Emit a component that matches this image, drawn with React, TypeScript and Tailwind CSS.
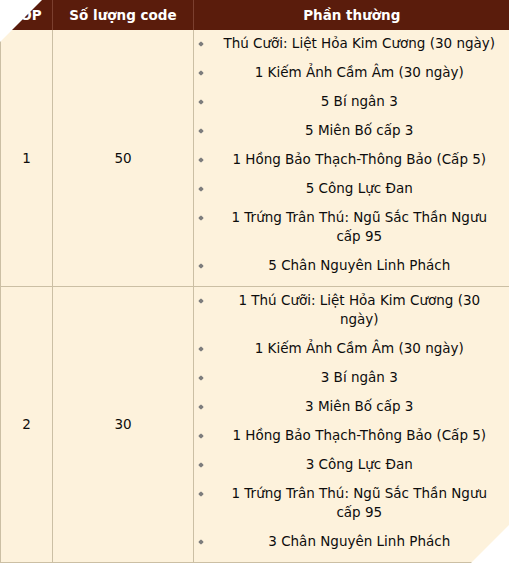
type Reward = { top: string; count: string; items: string[] };

const rewards: Reward[] = [
  {
    top: "1",
    count: "50",
    items: [
      "Thú Cưỡi: Liệt Hỏa Kim Cương (30 ngày)",
      "1 Kiếm Ảnh Cầm Âm (30 ngày)",
      "5 Bí ngân 3",
      "5 Miên Bố cấp 3",
      "1 Hồng Bảo Thạch-Thông Bảo (Cấp 5)",
      "5 Công Lực Đan",
      "1 Trứng Trân Thú: Ngũ Sắc Thần Ngưu cấp 95",
      "5 Chân Nguyên Linh Phách",
    ],
  },
  {
    top: "2",
    count: "30",
    items: [
      "1 Thú Cưỡi: Liệt Hỏa Kim Cương (30 ngày)",
      "1 Kiếm Ảnh Cầm Âm (30 ngày)",
      "3 Bí ngân 3",
      "3 Miên Bố cấp 3",
      "1 Hồng Bảo Thạch-Thông Bảo (Cấp 5)",
      "3 Công Lực Đan",
      "1 Trứng Trân Thú: Ngũ Sắc Thần Ngưu cấp 95",
      "3 Chân Nguyên Linh Phách",
    ],
  },
];

export default function App() {
  return (
    <div className="relative w-[509px] h-[565px] overflow-hidden bg-white font-['DejaVu_Sans',sans-serif] text-[13.5px] text-[#0d0d0d]">
      <table className="w-[509px] table-fixed border-collapse">
        <colgroup>
          <col className="w-[52px]" />
          <col className="w-[141px]" />
          <col className="w-[316px]" />
        </colgroup>
        <thead>
          <tr className="bg-[#5a1c0c] text-white font-bold leading-[30px] h-[30px]">
            <th className="p-0 text-center">TOP</th>
            <th className="p-0 text-center border-l border-[#7b3f2f]">Số lượng code</th>
            <th className="p-0 text-center border-l border-[#7b3f2f]">Phần thường</th>
          </tr>
        </thead>
        <tbody className="bg-[#fdf2dc]">
          {rewards.map((r) => (
            <tr key={r.top} className="border-b border-[#cbbfa4]">
              <td className="p-0 text-center align-middle border-l border-[#cbbfa4]">{r.top}</td>
              <td className="p-0 text-center align-middle border-l border-[#cbbfa4]">{r.count}</td>
              <td className="p-0 align-top border-l border-[#cbbfa4]">
                <ul className="pt-[4px] pb-[1px] pr-[11px]">
                  {r.items.map((item) => (
                    <li key={item} className="flex items-start leading-[19px] mb-[10px]">
                      <span className="w-[26px] shrink-0 h-[19px] flex items-center">
                        <span className="ml-[5px] w-[4px] h-[4px] rotate-45 bg-[#7d7d7d] rounded-[1px]" />
                      </span>
                      <span className="flex-1 text-center">{item}</span>
                    </li>
                  ))}
                </ul>
              </td>
            </tr>
          ))}
        </tbody>
      </table>
      <div className="absolute left-0 top-0 w-[42px] h-[42px] bg-white [clip-path:polygon(0_0,100%_0,0_100%)]" />
      <div className="absolute right-0 bottom-0 w-[40px] h-[40px] bg-white [clip-path:polygon(100%_0,100%_100%,0_100%)]" />
    </div>
  );
}
